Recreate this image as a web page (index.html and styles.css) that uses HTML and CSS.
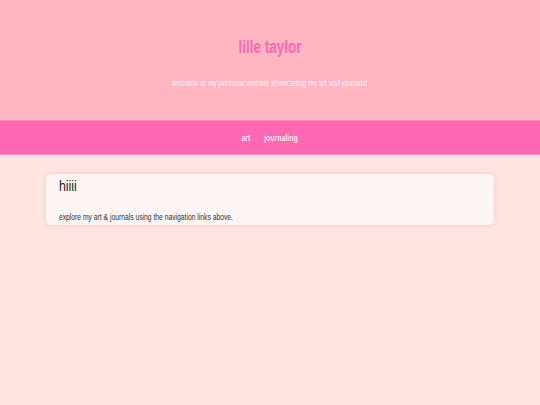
FILE: index.html
```html
<!DOCTYPE html>
<html>
<head>
<meta charset="utf-8">
<link rel="stylesheet" href="styles.css">
</head>
<body>
<header class="site-header">
  <h1 class="site-title">lille taylor</h1>
  <p class="site-tagline">welcome to my personal website showcasing my art and journals!</p>
</header>
<nav class="site-nav">
  <div class="nav-inner">
    <a href="#" class="nav-link">art</a>
    <a href="#" class="nav-link">journaling</a>
  </div>
</nav>
<main class="content">
  <section class="card">
    <h2 class="card-title">hiiii</h2>
    <p class="card-text">explore my art &amp; journals using the navigation links above.</p>
  </section>
</main>
</body>
</html>
```
FILE: styles.css
```css
html, body {
  margin: 0;
  padding: 0;
}
body {
  background: #ffe4e1;
  font-family: "Liberation Sans Narrow", "Liberation Sans", Arial, sans-serif;
  width: 540px;
  height: 405px;
}
.site-header {
  background: #ffb6c1;
  height: 120px;
  display: flex;
  flex-direction: column;
  align-items: center;
  box-sizing: border-box;
  padding-top: 36px;
}
.site-title {
  margin: 0;
  color: #ff69b4;
  font-size: 18px;
  font-weight: bold;
  line-height: 22px;
  transform: scaleX(0.75);
}
.site-tagline {
  margin: 19px 0 0;
  color: #fff0f5;
  font-size: 9px;
  line-height: 12px;
  transform: scaleX(0.75);
}
.site-nav {
  background: #ff69b4;
  height: 35px;
  display: flex;
  justify-content: center;
  align-items: center;
  border-top: 1px solid #ff8cc6;
  border-bottom: 1px solid #ff8cc6;
  box-sizing: border-box;
}
.nav-inner {
  display: flex;
  gap: 19px;
  transform: scaleX(0.73);
}
.nav-link {
  color: #ffe4f0;
  font-weight: bold;
  font-size: 9.5px;
  text-decoration: none;
}
.content {
  padding: 19px 46px;
}
.card {
  background: #fff5f5;
  border-radius: 5px;
  box-shadow: 0 0 4px rgba(200, 120, 120, 0.25);
  padding: 3px 13px 3px;
  height: 51px;
  box-sizing: border-box;
}
.card-title {
  margin: 0;
  font-size: 14.5px;
  line-height: 18px;
  color: #222;
  font-weight: normal;
  transform: scaleX(0.85);
  transform-origin: left center;
}
.card-text {
  margin: 16px 0 0;
  font-size: 9.5px;
  line-height: 12px;
  color: #333;
  transform: scaleX(0.71);
  transform-origin: left center;
}
```
